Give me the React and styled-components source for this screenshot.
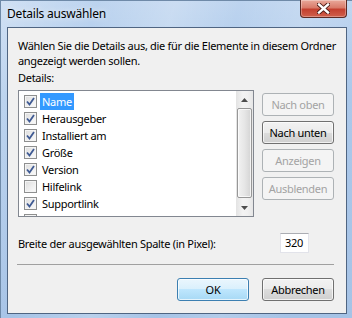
import React from "react";
import styled, { createGlobalStyle } from "styled-components";

const GlobalStyle = createGlobalStyle`
  html, body {
    margin: 0;
    padding: 0;
    background: #ffffff;
  }
  body {
    font-family: "Noto Sans", "Open Sans", sans-serif;
    font-size: 11px;
    letter-spacing: -0.3px;
  }
`;

const columns = [
  { label: "Name", checked: true, selected: true },
  { label: "Herausgeber", checked: true },
  { label: "Installiert am", checked: true },
  { label: "Größe", checked: true },
  { label: "Version", checked: true },
  { label: "Hilfelink", checked: false },
  { label: "Supportlink", checked: true },
  { label: "", checked: false },
];

function App() {
  return (
    <>
      <GlobalStyle />
      <Window>
        <TitleBar>
          <Title>Details auswählen</Title>
          <CloseButton>
            <svg width="13" height="11" viewBox="0 0 13 11">
              <path d="M2 1.5 L11 9.5 M11 1.5 L2 9.5" stroke="#4a1a14" strokeWidth="4.2" strokeLinecap="square" />
              <path d="M2 1.5 L11 9.5 M11 1.5 L2 9.5" stroke="#ffffff" strokeWidth="2.4" strokeLinecap="square" />
            </svg>
          </CloseButton>
        </TitleBar>
        <Client>
          <Intro>
            Wählen Sie die Details aus, die für die Elemente in diesem Ordner
            <br />
            angezeigt werden sollen.
          </Intro>
          <Label>Details:</Label>
          <MainRow>
            <ListBox>
              <Items>
                {columns.map((c, i) => (
                  <Row key={i}>
                    <Check checked={c.checked} />
                    {c.label && <ItemText $selected={c.selected}>{c.label}</ItemText>}
                  </Row>
                ))}
              </Items>
              <ScrollBar>
                <Arrow>
                  <svg width="7" height="4" viewBox="0 0 7 4">
                    <path d="M0 4 L3.5 0 L7 4 Z" fill="#4d4d4d" />
                  </svg>
                </Arrow>
                <Thumb />
                <Arrow>
                  <svg width="7" height="4" viewBox="0 0 7 4">
                    <path d="M0 0 L3.5 4 L7 0 Z" fill="#4d4d4d" />
                  </svg>
                </Arrow>
              </ScrollBar>
            </ListBox>
            <SideButtons>
              <Button disabled>Nach oben</Button>
              <Button>Nach unten</Button>
              <Button disabled>Anzeigen</Button>
              <Button disabled>Ausblenden</Button>
            </SideButtons>
          </MainRow>
          <WidthRow>
            <span>Breite der ausgewählten Spalte (in Pixel):</span>
            <NumberBox>320</NumberBox>
          </WidthRow>
          <Separator />
          <Footer>
            <Button $default>OK</Button>
            <Button>Abbrechen</Button>
          </Footer>
        </Client>
      </Window>
    </>
  );
}

function Check({ checked }) {
  return (
    <CheckBox>
      {checked && (
        <svg width="9" height="9" viewBox="0 0 9 9">
          <path d="M1 4.5 L3.5 7.5 L8 1" fill="none" stroke="#3f5a93" strokeWidth="1.8" />
        </svg>
      )}
    </CheckBox>
  );
}

const Window = styled.div`
  width: 352px;
  height: 318px;
  box-sizing: border-box;
  display: flex;
  flex-direction: column;
  border-left: 1px solid #6f8aa8;
  border-top: 1px solid #6f8aa8;
  background:
    linear-gradient(105deg, rgba(255, 255, 255, 0.3) 0%, rgba(255, 255, 255, 0) 22%,
      rgba(255, 255, 255, 0.22) 40%, rgba(255, 255, 255, 0) 55%,
      rgba(255, 255, 255, 0.15) 70%, rgba(255, 255, 255, 0) 85%),
    linear-gradient(to bottom, #bdd4ef 0%, #abc8ea 30%, #a6c3e6 100%);
`;

const TitleBar = styled.div`
  height: 26px;
  display: flex;
  align-items: flex-start;
  padding-left: 6px;
`;

const Title = styled.div`
  margin-top: 5px;
  font-size: 12px;
  line-height: 16px;
  color: #000000;
  letter-spacing: -0.2px;
  text-shadow: 0 0 6px rgba(255, 255, 255, 0.9);
`;

const CloseButton = styled.div`
  margin-left: auto;
  margin-right: 5px;
  margin-top: -1px;
  width: 47px;
  height: 18px;
  box-sizing: border-box;
  border: 1px solid #5c2a24;
  border-top: none;
  border-radius: 0 0 4px 4px;
  display: flex;
  align-items: center;
  justify-content: center;
  background: linear-gradient(to bottom, #e9a99b 0%, #d97b6a 45%, #c4402f 55%, #d0604c 100%);
  box-shadow: inset 0 0 0 1px rgba(255, 255, 255, 0.3);
`;

const Client = styled.div`
  flex: 1;
  margin: 0 5px 4px 6px;
  border: 1px solid #4f6582;
  background: #f0f0f0;
  padding: 10px 12px 12px 10px;
  display: flex;
  flex-direction: column;
  color: #000000;
`;

const Intro = styled.div`
  line-height: 15px;
  white-space: nowrap;
`;

const Label = styled.div`
  margin-top: 2px;
  line-height: 15px;
`;

const MainRow = styled.div`
  margin-top: 5px;
  display: flex;
  height: 127px;
`;

const ListBox = styled.div`
  width: 236px;
  box-sizing: border-box;
  border: 1px solid #828790;
  background: #ffffff;
  display: flex;
`;

const Items = styled.div`
  flex: 1;
  overflow: hidden;
  padding: 2px 0 0 5px;
`;

const Row = styled.div`
  height: 17px;
  flex-shrink: 0;
  display: flex;
  align-items: center;
`;

const CheckBox = styled.div`
  width: 13px;
  height: 13px;
  flex-shrink: 0;
  box-sizing: border-box;
  border: 1px solid #8e8f8f;
  background: linear-gradient(135deg, #dcdcdc 0%, #f0f0f0 60%, #fbfbfb 100%);
  box-shadow: inset 0 0 0 1px #f4f4f4;
  display: flex;
  align-items: center;
  justify-content: center;
`;

const ItemText = styled.span`
  margin-left: 3px;
  padding: 0 2px;
  line-height: 17px;
  background: ${(p) => (p.$selected ? "#3399ff" : "transparent")};
  color: ${(p) => (p.$selected ? "#ffffff" : "#000000")};
`;

const ScrollBar = styled.div`
  width: 17px;
  display: flex;
  flex-direction: column;
  background: linear-gradient(to right, #e3e3e3, #f3f3f3 40%, #f0f0f0 70%, #e6e6e6);
`;

const Arrow = styled.div`
  height: 17px;
  display: flex;
  align-items: center;
  justify-content: center;
`;

const Thumb = styled.div`
  flex: 1;
  margin: 0 1px 1px 1px;
  border: 1px solid #979797;
  border-radius: 2px;
  background: linear-gradient(to right, #f2f2f2 0%, #e6e6e6 50%, #d4d4d4 100%);
  box-shadow: inset 0 0 0 1px rgba(255, 255, 255, 0.7);
`;

const SideButtons = styled.div`
  margin-left: auto;
  padding-top: 3px;
  display: flex;
  flex-direction: column;
  gap: 5px;
`;

const Button = styled.button`
  width: 72px;
  height: 23px;
  box-sizing: border-box;
  padding: 0;
  font-family: inherit;
  font-size: 11px;
  letter-spacing: -0.3px;
  border-radius: 3px;
  border: 1px solid ${(p) => (p.disabled ? "#adb2b5" : p.$default ? "#3c7fb1" : "#707070")};
  color: ${(p) => (p.disabled ? "#a3a3a3" : "#000000")};
  background: ${(p) =>
    p.disabled
      ? "#f4f4f4"
      : p.$default
      ? "linear-gradient(to bottom, #eaf6fd 0%, #d9f0fc 50%, #bee6fd 50%, #a7d9f5 100%)"
      : "linear-gradient(to bottom, #f2f2f2 0%, #ebebeb 50%, #dddddd 50%, #cfcfcf 100%)"};
  box-shadow: inset 0 0 0 1px ${(p) => (p.disabled ? "transparent" : "rgba(255, 255, 255, 0.7)")};
`;

const WidthRow = styled.div`
  margin-top: 16px;
  height: 20px;
  display: flex;
  align-items: center;
  justify-content: space-between;
  padding-right: 25px;
`;

const NumberBox = styled.div`
  width: 29px;
  height: 20px;
  box-sizing: border-box;
  border: 1px solid #e2e3ea;
  border-top-color: #abadb3;
  background: #ffffff;
  padding-left: 4px;
  line-height: 18px;
`;

const Separator = styled.div`
  margin-top: 11px;
  height: 1px;
  margin-left: -1px;
  background: #a0a0a0;
`;

const Footer = styled.div`
  margin-top: 13px;
  display: flex;
  justify-content: flex-end;
  gap: 13px;
`;

export default App;
